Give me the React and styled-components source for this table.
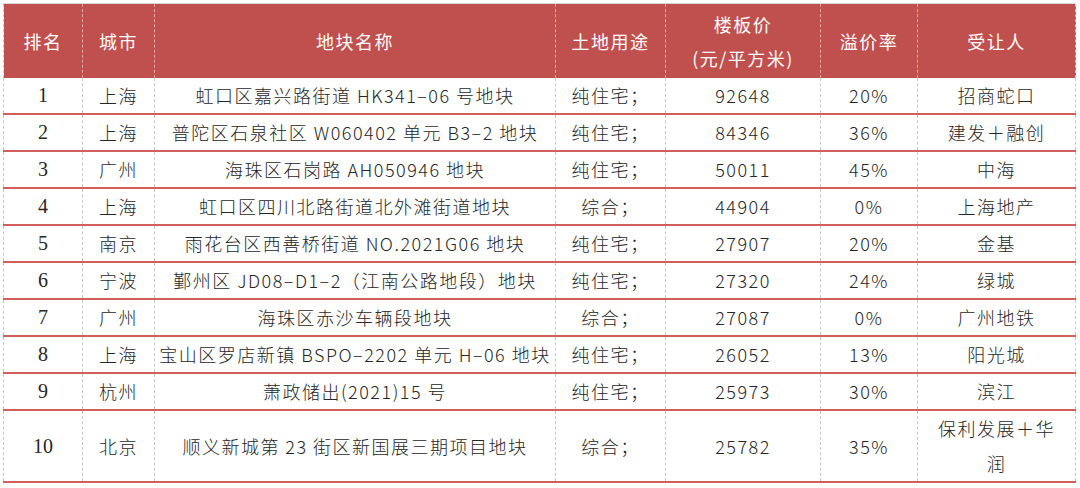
import React from 'react'
import styled, { createGlobalStyle } from 'styled-components'

const GlobalStyle = createGlobalStyle`
  html, body {
    margin: 0;
    padding: 0;
    background: #fff;
  }
`

const Wrap = styled.div`
  padding: 3px 5px 0 3px;
  width: 1080px;
  box-sizing: border-box;
`

const Table = styled.table`
  width: 1072px;
  border-collapse: collapse;
  table-layout: fixed;
  font-family: 'Noto Sans CJK SC', 'Noto Sans', sans-serif;
  font-size: 18px;
  color: #262626;
  border-top: 1px solid #d8d8d8;
`

const HeadCell = styled.th`
  background: #c0504d;
  color: #fff;
  font-weight: 400;
  height: 74px;
  padding: 0;
  line-height: 34px;
  letter-spacing: 1.5px;
  text-align: center;
  border-left: 1px dashed #e2a8a6;
  border-right: 1px dashed #e2a8a6;
  &:first-child {
    border-left: 1px dashed #c8c8c8;
  }
  &:last-child {
    border-right: 1px dashed #c8c8c8;
  }
`

const Cell = styled.td`
  height: ${(p) => (p.$tall ? 69 : 35)}px;
  padding: 0;
  text-align: center;
  line-height: 35px;
  letter-spacing: 1.5px;
  font-weight: 300;
  border-left: 1px dashed #c6c6c6;
  border-right: 1px dashed #c6c6c6;
  border-bottom: 2px solid #d25f5c;
  white-space: nowrap;
`

const Rank = styled(Cell)`
  font-family: 'Liberation Serif', 'DejaVu Serif', serif;
  font-size: 20px;
  font-weight: 400;
  letter-spacing: 0;
`

const columns = [79, 72, 401, 110, 155, 97, 158]

const rows = [
  ['1', '上海', '虹口区嘉兴路街道 HK341–06 号地块', '纯住宅；', '92648', '20%', '招商蛇口'],
  ['2', '上海', '普陀区石泉社区 W060402 单元 B3–2 地块', '纯住宅；', '84346', '36%', '建发＋融创'],
  ['3', '广州', '海珠区石岗路 AH050946 地块', '纯住宅；', '50011', '45%', '中海'],
  ['4', '上海', '虹口区四川北路街道北外滩街道地块', '综合；', '44904', '0%', '上海地产'],
  ['5', '南京', '雨花台区西善桥街道 NO.2021G06 地块', '纯住宅；', '27907', '20%', '金基'],
  ['6', '宁波', '鄞州区 JD08–D1–2（江南公路地段）地块', '纯住宅；', '27320', '24%', '绿城'],
  ['7', '广州', '海珠区赤沙车辆段地块', '综合；', '27087', '0%', '广州地铁'],
  ['8', '上海', '宝山区罗店新镇 BSPO–2202 单元 H–06 地块', '纯住宅；', '26052', '13%', '阳光城'],
  ['9', '杭州', '萧政储出(2021)15 号', '纯住宅；', '25973', '30%', '滨江'],
  ['10', '北京', '顺义新城第 23 街区新国展三期项目地块', '综合；', '25782', '35%', ['保利发展＋华', '润']],
]

const App = () => {
  return (
    <Wrap>
      <GlobalStyle />
      <Table>
        <colgroup>
          {columns.map((w, i) => (
            <col key={i} style={{ width: w }} />
          ))}
        </colgroup>
        <thead>
          <tr>
            <HeadCell>排名</HeadCell>
            <HeadCell>城市</HeadCell>
            <HeadCell>地块名称</HeadCell>
            <HeadCell>土地用途</HeadCell>
            <HeadCell>
              楼板价
              <br />
              (元/平方米)
            </HeadCell>
            <HeadCell>溢价率</HeadCell>
            <HeadCell>受让人</HeadCell>
          </tr>
        </thead>
        <tbody>
          {rows.map((r) => {
            const tall = Array.isArray(r[6])
            return (
              <tr key={r[0]}>
                <Rank $tall={tall}>{r[0]}</Rank>
                <Cell $tall={tall}>{r[1]}</Cell>
                <Cell $tall={tall}>{r[2]}</Cell>
                <Cell $tall={tall}>{r[3]}</Cell>
                <Cell $tall={tall}>{r[4]}</Cell>
                <Cell $tall={tall}>{r[5]}</Cell>
                <Cell $tall={tall}>
                  {tall ? (
                    <>
                      {r[6][0]}
                      <br />
                      {r[6][1]}
                    </>
                  ) : (
                    r[6]
                  )}
                </Cell>
              </tr>
            )
          })}
        </tbody>
      </Table>
    </Wrap>
  )
}

export default App
